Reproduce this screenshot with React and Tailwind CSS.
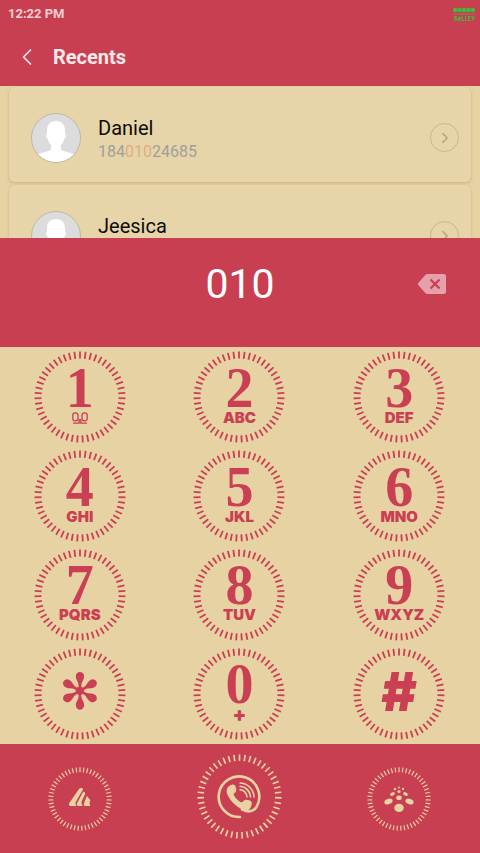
import { ChevronLeft, ChevronRight } from 'lucide-react';

const contacts = [
  { name: 'Daniel', number: ['184', '010', '24685'] },
  { name: 'Jeesica' },
];

const keys = [
  { digit: '1', icon: true },
  { digit: '2', label: 'ABC' },
  { digit: '3', label: 'DEF' },
  { digit: '4', label: 'GHI' },
  { digit: '5', label: 'JKL' },
  { digit: '6', label: 'MNO' },
  { digit: '7', label: 'PQRS', raised: true },
  { digit: '8', label: 'TUV', raised: true },
  { digit: '9', label: 'WXYZ', raised: true },
  { digit: '✻' },
  { digit: '0', label: '+', raised: true },
  { digit: '#' },
];

// circle of short radial ticks
function Ring({ className, ticks, inner, width }) {
  return (
    <svg viewBox="-46 -46 92 92" className={className} stroke="currentColor" strokeWidth={width} aria-hidden="true">
      {Array.from({ length: ticks }, (_, i) => (
        <line key={i} x1="0" y1={-inner} x2="0" y2="-45.5" transform={`rotate(${(i * 360) / ticks})`} />
      ))}
    </svg>
  );
}

function Avatar() {
  return (
    <svg viewBox="0 0 50 50" className="size-[50px] shrink-0" aria-hidden="true">
      <defs>
        <clipPath id="avatar-clip">
          <circle cx="25" cy="25" r="24" />
        </clipPath>
      </defs>
      <circle cx="25" cy="25" r="24.5" fill="#dcdcdc" stroke="#bdb7a8" strokeWidth="1" />
      <path
        clipPath="url(#avatar-clip)"
        fill="#fff"
        d="M25 8c-6 0-9.200 4-9 10v2.500c-1.500.3-1 4.500.8 5.500.5 2.500 1.700 4.500 3.200 6v4.500C19 39 8 39 5 43v8h40v-8c-3-4-14-4-15-6.500V32c1.500-1.500 2.700-3.500 3.200-6 1.800-1 2.300-5.200.8-5.500V18c.2-6-3-10-9-10z"
      />
    </svg>
  );
}

function ContactCard({ contact }) {
  return (
    <li className="flex h-[95px] shrink-0 items-center rounded-md bg-[#e7d4a8] pt-1.5 pr-3 pl-[22px] shadow-[0_1px_3px_rgba(120,95,40,0.28)]">
      <Avatar />
      <div className="ml-[17px] h-12 flex-1 pt-0.5">
        <p className="text-[20px] leading-6 text-[#0d0c08]">{contact.name}</p>
        {contact.number && (
          <p className="text-[16px] leading-6 text-[#a09f9b]">
            {contact.number[0]}
            <span className="text-[#e3ac7e]">{contact.number[1]}</span>
            {contact.number[2]}
          </p>
        )}
      </div>
      <button aria-label={`Details for ${contact.name}`} className="flex size-[29px] items-center justify-center rounded-full border border-[#cbb888] text-[#b3a47b]">
        <ChevronRight size={18} strokeWidth={1.8} />
      </button>
    </li>
  );
}

function Voicemail() {
  return (
    <svg viewBox="0 0 16 12" className="h-3 w-4" fill="none" stroke="currentColor" strokeWidth="1.300" aria-hidden="true">
      <rect x="0.800" y="0.800" width="5.200" height="8" rx="2.400" />
      <rect x="10" y="0.800" width="5.200" height="8" rx="2.400" />
      <path d="M1 11.200h6.200V7M15 11.200H8.800V7" />
    </svg>
  );
}

function Key({ item }) {
  const { digit, label, icon, raised } = item;
  return (
    <button className="relative flex items-center justify-center">
      <Ring className="absolute size-[92px]" ticks={51} inner={38.5} width={1.8} />
      {digit === '✻' && (
        <span aria-label="star" className="pb-1 font-['DejaVu_Sans',sans-serif] text-[50px] leading-[50px]">
          {digit}
        </span>
      )}
      {digit === '#' && (
        <span className="pb-1 font-[Inter,sans-serif] text-[54px] leading-[54px] font-black">{digit}</span>
      )}
      {(label || icon) && (
        <span className={`flex flex-col items-center gap-0.5 ${raised ? 'pb-1' : 'pb-0.5'}`}>
          <span className="font-['Liberation_Serif',serif] text-[56px] leading-[42px] font-bold">{digit}</span>
          <span
            className={`flex h-[14px] items-center font-[Inter,sans-serif] leading-[14px] font-black ${label === '+' ? 'text-[20px]' : 'text-[15px]'}`}
          >
            {icon ? <Voicemail /> : label}
          </span>
        </span>
      )}
    </button>
  );
}

export default function App() {
  return (
    <div className="flex h-screen flex-col overflow-hidden bg-[#e6d2a2] font-[Roboto,sans-serif]">
      <header className="shrink-0 bg-[#c93f52] pb-[14px] text-[#fbe9ea]">
        <div className="flex h-7 items-center justify-between pr-[5px] pl-2">
          <span className="text-[13px] font-bold text-[#f3cfd3]">12:22 PM</span>
          <svg viewBox="0 0 22 14" className="h-[14px] w-[22px]" fill="#43b93c" aria-hidden="true">
            {[2.2, 6.600, 11, 15.4, 19.8].map((x) => (
              <circle key={x} cx={x} cy="3" r="2.300" />
            ))}
            <path d="M1 6.500h20v1H1z" opacity="0.8" />
            <path d="M1 9h3v1H2.500v1H4v3H1v-1h1.500v-1H1zM5 10h2.500v4h-1v-1H6v1H5zM8.500 9h1v4H11v1H8.500zM12 9h1v4h1v1h-2zM15 9h2.500v1H16v1h1v1h-1v1h1.500v1H15zM18.500 9h1v1h1V9h1v2l-1 1v2h-1v-2l-1-1z" />
          </svg>
        </div>
        <div className="flex h-11 items-center pt-3.5">
          <button aria-label="Back" className="ml-[13px] flex w-7 justify-center">
            <ChevronLeft size={30} strokeWidth={1.5} />
          </button>
          <h1 className="ml-3 text-[20px] leading-6 font-bold">Recents</h1>
        </div>
      </header>

      <ul className="flex min-h-0 flex-1 flex-col gap-[3px] overflow-hidden px-[9px] pt-px">
        {contacts.map((c) => (
          <ContactCard key={c.name} contact={c} />
        ))}
      </ul>

      <div className="grid h-[109px] shrink-0 grid-cols-[80px_1fr_80px] items-center bg-[#c93f52] pb-[18px]">
        <output className="col-start-2 text-center text-[41px] leading-[50px] text-white">010</output>
        <button aria-label="Delete digit" className="justify-self-center pr-4">
          <svg viewBox="0 0 28 20" className="h-5 w-7" aria-hidden="true">
            <path fill="#e5a0aa" d="M9.500 0H26a2 2 0 0 1 2 2v16a2 2 0 0 1-2 2H9.500a3 3 0 0 1-2-.8L.7 11.500a2 2 0 0 1 0-3L7.500.8a3 3 0 0 1 2-.8z" />
            <path stroke="#c93f52" strokeWidth="2.200" d="m12.500 5.500 9 9m0-9-9 9" />
          </svg>
        </button>
      </div>

      <div className="grid h-[397px] shrink-0 grid-cols-3 grid-rows-4 pr-px text-[#cb3f54]">
        {keys.map((k) => (
          <Key key={k.digit} item={k} />
        ))}
      </div>

      <footer className="grid h-[109px] shrink-0 grid-cols-3 items-center justify-items-center bg-[#c93f52] pr-px text-[#e6d2a2]">
        <button aria-label="Menu" className="relative flex size-16 items-center justify-center">
          <Ring className="absolute size-16" ticks={51} inner={38.5} width={1.7} />
          <svg viewBox="0 0 22 18" className="mb-1 h-[18px] w-[22px]" fill="currentColor" aria-hidden="true">
            <path d="M10 1c1-1.300 3.500-1.200 4 .5L7 13.500c-.8 1.500-.6 2.500.3 4.500H2c-2 0-2.700-1.500-1.700-3z" />
            <path d="M14.300 3.500c1.700.5 2.200 1.500 1.800 2.800l-3.300 7c-.6 1.500-.4 2.700.8 4.700H9.600c-1.800 0-2.200-1.500-1.400-3z" />
            <path d="M17.800 8c1.200.6 1.300 2 2.200 2.500 1.800 1 1.500 3 .5 4 .2 1.500.3 2.500 1 3.500h-5c-1.900 0-2.200-1.500-1.400-3z" />
          </svg>
        </button>
        <button aria-label="Call" className="relative mb-1 flex size-[85px] items-center justify-center">
          <Ring className="absolute size-[85px]" ticks={47} inner={38.5} width={1.8} />
          <svg viewBox="0 0 44 44" className="size-11" fill="none" stroke="currentColor" aria-hidden="true">
            <path strokeWidth="2.600" strokeLinecap="round" d="M23 42A20.300 20.300 0 1 1 39.500 32C36.500 37 30 37.500 25 34.500" />
            <path
              fill="currentColor"
              stroke="none"
              d="M11.500 11.500c2-1.800 4.500-2.500 6-1.500 1.500 1.500 2 4.500 1.700 6.200-.5 1.500-2.500 1.500-2.500 3.300 1 3 4.500 6.500 7.500 7.800 2 .2 2.500-2.300 4.500-2.500 2-.2 5 .8 5.800 2 .8 2-.3 5.200-2 7.500-1.500 1.500-5 1.500-7.500.2C18.500 31 12.500 25 10 18.500c-.8-2.500-.3-5.500 1.500-7z"
            />
            <path strokeWidth="1.600" d="M22.500 8c8 0 14.500 6.500 14.500 14.500M22.500 11.300c6 0 11 5 11 11.200M22.500 14.600c4.200 0 7.500 3.500 7.500 7.900" />
          </svg>
        </button>
        <button aria-label="Keypad" className="relative flex size-16 items-center justify-center">
          <Ring className="absolute size-16" ticks={51} inner={38.5} width={1.7} />
          <svg viewBox="0 0 30 26" className="h-[26px] w-[30px]" fill="currentColor" aria-hidden="true">
            <ellipse cx="15" cy="21.800" rx="4.800" ry="4.100" />
            <ellipse cx="4.500" cy="15.500" rx="4.300" ry="2.700" transform="rotate(-20 4.500 15.500)" />
            <ellipse cx="25.500" cy="15.500" rx="4.300" ry="2.700" transform="rotate(20 25.500 15.500)" />
            <ellipse cx="15" cy="11.800" rx="2.800" ry="2.300" />
            <ellipse cx="8.500" cy="8" rx="2.500" ry="1.600" transform="rotate(-25 8.500 8)" />
            <ellipse cx="21.500" cy="8" rx="2.500" ry="1.600" transform="rotate(25 21.500 8)" />
            <circle cx="15" cy="5.500" r="1.600" />
            <circle cx="11" cy="3" r="1.200" />
            <circle cx="19" cy="3" r="1.200" />
            <circle cx="15" cy="1.500" r="0.900" />
          </svg>
        </button>
      </footer>
    </div>
  );
}
